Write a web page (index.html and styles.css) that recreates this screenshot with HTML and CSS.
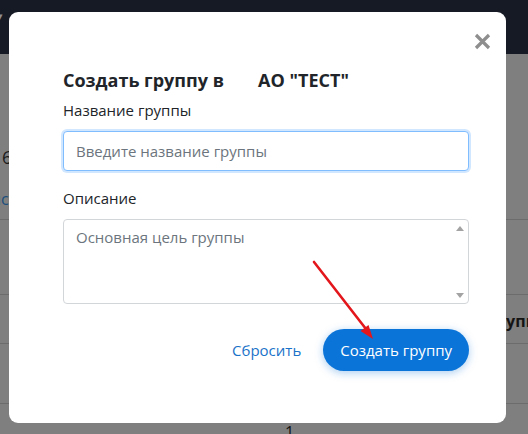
FILE: index.html
```html
<!DOCTYPE html>
<html lang="ru">
<head>
<meta charset="utf-8">
<title>Создать группу</title>
<link rel="stylesheet" href="styles.css">
</head>
<body>
<div class="page">
  <header class="bg-header"><span class="bg-caret">&#9662;</span></header>
  <main class="bg-content">
    <section class="bg-intro">
      <p class="bg-num">6</p>
      <p class="bg-link">ıc</p>
    </section>
    <div class="bg-row bg-row-a"></div>
    <div class="bg-row bg-row-b"><span class="bg-th">Групп</span></div>
    <div class="bg-row bg-row-c"></div>
    <div class="bg-row bg-row-d"><span class="bg-page">1</span></div>
  </main>
</div>

<div class="modal" role="dialog" aria-labelledby="modal-title">
  <div class="modal-top">
    <button class="close" type="button" aria-label="Закрыть">
      <svg width="17" height="17" viewBox="0 0 17 17" aria-hidden="true"><path d="M2 2 L15 15 M15 2 L2 15" stroke="#8e8e8e" stroke-width="3.2" stroke-linecap="butt"/></svg>
    </button>
  </div>
  <h2 class="modal-title" id="modal-title">Создать группу в<span class="org">АО "ТЕСТ"</span></h2>
  <label class="field-label" for="gname">Название группы</label>
  <input class="input" id="gname" type="text" placeholder="Введите название группы">
  <label class="field-label field-label-2" for="gdesc">Описание</label>
  <div class="textarea-box">
    <textarea class="textarea" id="gdesc" placeholder="Основная цель группы"></textarea>
    <div class="scrollbar" aria-hidden="true">
      <span class="tri tri-up"></span>
      <span class="tri tri-down"></span>
    </div>
  </div>
  <div class="actions">
    <button class="btn-link" type="button">Сбросить</button>
    <button class="btn-primary" type="button">Создать группу</button>
  </div>
  <svg class="annot" width="497" height="411" viewBox="0 0 497 411" aria-hidden="true">
    <line x1="305" y1="250" x2="357" y2="317" stroke="#e3161c" stroke-width="2.6" stroke-linecap="round"/>
    <polygon points="364,327 351.5,318.9 359.5,312.9" fill="#e3161c"/>
  </svg>
</div>
</body>
</html>
```

FILE: styles.css
```css
* { box-sizing: border-box; }
html, body { margin: 0; padding: 0; }
body {
  width: 528px;
  height: 434px;
  overflow: hidden;
  background: #7f7f7f;
  font-family: "Open Sans", "Noto Sans", sans-serif;
  position: relative;
}
.page { width: 528px; }
.bg-header {
  height: 54px;
  background: #161a25;
  position: relative;
}
.bg-caret {
  display: block;
  padding-top: 9px;
  margin-left: -3px;
  font-size: 11px;
  line-height: 14px;
  color: #8c8f95;
}
.bg-intro { height: 165px; }
.bg-num {
  margin: 0;
  padding: 92px 0 0 2px;
  font-size: 18px;
  line-height: 22px;
  color: #1b1b1b;
}
.bg-link {
  margin: 20px 0 0 -3px;
  font-size: 16px;
  line-height: 22px;
  color: #1b4e7c;
}
.bg-row { border-top: 1px solid #6c6c6c; }
.bg-row-a { height: 75px; }
.bg-row-b { height: 49px; padding: 15px 0 0 487px; }
.bg-row-c { height: 60px; }
.bg-row-d { height: 40px; padding: 17px 0 0 285px; }
.bg-th {
  font-weight: 700;
  font-size: 16px;
  line-height: 20px;
  color: #141414;
  white-space: nowrap;
}
.bg-page {
  font-size: 16px;
  line-height: 18px;
  color: #141414;
}

.modal {
  position: absolute;
  left: 9px;
  top: 12px;
  width: 497px;
  height: 411px;
  background: #fff;
  border-radius: 9px;
  padding: 0 37px 0 54px;
  display: flex;
  flex-direction: column;
  color: #212529;
}
.modal-top {
  display: flex;
  justify-content: flex-end;
  padding-top: 21px;
  margin-right: -22px;
}
.close {
  width: 17px;
  height: 17px;
  padding: 0;
  border: 0;
  background: none;
  display: block;
}
.close svg { display: block; }
.modal-title {
  margin: 18px 0 0;
  font-size: 18px;
  font-weight: 700;
  line-height: 24px;
  color: #212529;
}
.org { margin-left: 34px; }
.field-label {
  display: block;
  margin-top: 8px;
  font-size: 15px;
  line-height: 20px;
  color: #212529;
}
.field-label-2 { margin-top: 17px; }
.input {
  display: block;
  margin-top: 11px;
  width: 100%;
  height: 40px;
  border: 1px solid #80bdff;
  border-radius: 4px;
  box-shadow: 0 0 0 2px rgba(0,123,255,0.18);
  padding: 0 12px;
  font-family: inherit;
  font-size: 15px;
  color: #495057;
  outline: none;
}
.input::placeholder, .textarea::placeholder { color: #6c757d; opacity: 1; }
.textarea-box {
  margin-top: 11px;
  height: 85px;
  border: 1px solid #d3d6d9;
  border-radius: 4px;
  display: flex;
}
.textarea {
  flex: 1;
  border: 0;
  resize: none;
  padding: 6px 12px;
  font-family: inherit;
  font-size: 15px;
  line-height: 22px;
  outline: none;
  overflow: hidden;
  background: transparent;
}
.scrollbar {
  width: 17px;
  display: flex;
  flex-direction: column;
  justify-content: space-between;
  align-items: center;
  padding: 6px 0 5px;
}
.tri {
  width: 0;
  height: 0;
  border-left: 4.5px solid transparent;
  border-right: 4.5px solid transparent;
}
.tri-up { border-bottom: 5px solid #a3a3a3; }
.tri-down { border-top: 5px solid #a3a3a3; }
.actions {
  margin-top: 25px;
  display: flex;
  justify-content: flex-end;
  align-items: center;
  gap: 22px;
}
.btn-link {
  border: 0;
  background: none;
  padding: 0;
  font-family: inherit;
  font-size: 15px;
  color: #1a73c8;
}
.btn-primary {
  height: 42px;
  border: 0;
  border-radius: 21px;
  background: #0b74d8;
  color: #fff;
  padding: 0 17px;
  font-family: inherit;
  font-size: 15px;
  box-shadow: 0 2px 8px rgba(11,116,216,0.35);
}
.annot {
  position: absolute;
  left: 0;
  top: 0;
  pointer-events: none;
}
```
